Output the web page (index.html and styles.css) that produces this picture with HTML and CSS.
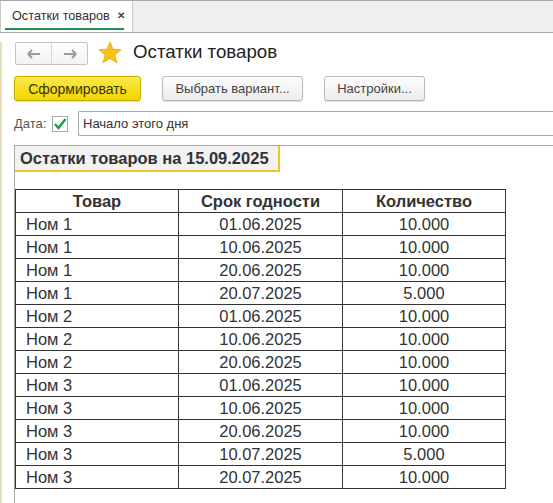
FILE: index.html
```html
<!DOCTYPE html>
<html lang="ru">
<head>
<meta charset="utf-8">
<link rel="stylesheet" href="styles.css">
</head>
<body>
<div class="tabbar">
  <div class="tab"><span class="tab-text">Остатки товаров</span><span class="tab-close">✕</span></div>
</div>
<div class="main">
  <div class="head">
    <div class="nav">
      <div class="nav-btn"><svg width="14" height="10" viewBox="0 0 14 10"><path d="M1 5H13M1 5L5 1M1 5L5 9" stroke="#9a9a9a" stroke-width="2" fill="none"/></svg></div>
      <div class="nav-btn"><svg width="14" height="10" viewBox="0 0 14 10"><path d="M1 5H13M13 5L9 1M13 5L9 9" stroke="#9a9a9a" stroke-width="2" fill="none"/></svg></div>
    </div>
    <svg class="star" width="24" height="23" viewBox="0 0 24 23"><path d="M12 0.8L15 8.3L23.2 8.7L16.8 13.9L19 21.9L12 17.4L5 21.9L7.2 13.9L0.8 8.7L9 8.3Z" fill="#f7c21c" stroke="#e8a800" stroke-width="0.8"/></svg>
    <div class="title">Остатки товаров</div>
  </div>
  <div class="buttons">
    <div class="btn btn-primary">Сформировать</div>
    <div class="btn btn-choose">Выбрать вариант...</div>
    <div class="btn btn-settings">Настройки...</div>
  </div>
  <div class="date-row">
    <span class="date-label">Дата:</span>
    <span class="checkbox"><svg width="14" height="14" viewBox="0 0 14 14"><path d="M2 7L5.5 11L12.5 2" stroke="#1c9a48" stroke-width="2.4" fill="none"/></svg></span>
    <div class="input">Начало этого дня</div>
  </div>
  <div class="report">
    <div class="report-title">Остатки товаров на 15.09.2025</div>
    <table class="grid">
      <thead>
        <tr><th class="c1">Товар</th><th class="c2">Срок годности</th><th class="c3">Количество</th></tr>
      </thead>
      <tbody>
        <tr><td class="name">Ном 1</td><td>01.06.2025</td><td>10.000</td></tr>
        <tr><td class="name">Ном 1</td><td>10.06.2025</td><td>10.000</td></tr>
        <tr><td class="name">Ном 1</td><td>20.06.2025</td><td>10.000</td></tr>
        <tr><td class="name">Ном 1</td><td>20.07.2025</td><td>5.000</td></tr>
        <tr><td class="name">Ном 2</td><td>01.06.2025</td><td>10.000</td></tr>
        <tr><td class="name">Ном 2</td><td>10.06.2025</td><td>10.000</td></tr>
        <tr><td class="name">Ном 2</td><td>20.06.2025</td><td>10.000</td></tr>
        <tr><td class="name">Ном 3</td><td>01.06.2025</td><td>10.000</td></tr>
        <tr><td class="name">Ном 3</td><td>10.06.2025</td><td>10.000</td></tr>
        <tr><td class="name">Ном 3</td><td>20.06.2025</td><td>10.000</td></tr>
        <tr><td class="name">Ном 3</td><td>10.07.2025</td><td>5.000</td></tr>
        <tr><td class="name">Ном 3</td><td>20.07.2025</td><td>10.000</td></tr>
      </tbody>
    </table>
  </div>
</div>
</body>
</html>
```
FILE: styles.css
```css
html, body {
  margin: 0;
  padding: 0;
  background: #fff;
  width: 553px;
  height: 503px;
  overflow: hidden;
  font-family: "Liberation Sans", Arial, sans-serif;
  color: #333;
}
.tabbar {
  height: 31px;
  background: #f0f0f0;
  border-top: 1px solid #a8a8a8;
  border-bottom: 1px solid #a8a8a8;
  display: flex;
}
.tab {
  width: 133px;
  background: #fff;
  border-right: 1px solid #c8c8c8;
  border-left: 1px solid #c8c8c8;
  box-sizing: border-box;
  position: relative;
  display: flex;
  align-items: center;
  padding-left: 11px;
  padding-bottom: 2px;
  font-size: 12.7px;
  color: #333;
}
.tab::after {
  content: "";
  position: absolute;
  left: 4px;
  width: 119px;
  bottom: 2px;
  height: 2px;
  background: #1f9150;
}
.tab-close {
  margin-left: 7px;
  font-size: 10px;
  font-weight: bold;
  color: #444;
}
.main {
  border-left: 2px solid #e6dfb6;
  padding-left: 12px;
  height: 471px;
  box-sizing: border-box;
}
.head {
  display: flex;
  align-items: center;
  height: 23px;
  margin-top: 9px;
}
.nav {
  display: flex;
  margin-left: 1px;
  width: 73px;
  height: 23px;
  box-sizing: border-box;
  border: 1px solid #c4c4c4;
  border-radius: 2px;
  background: linear-gradient(#fff, #f2f2f2);
}
.nav-btn {
  flex: 1;
  display: flex;
  align-items: center;
  justify-content: center;
}
.nav-btn + .nav-btn {
  border-left: 1px solid #d8d8d8;
}
.star {
  margin-left: 10px;
  margin-top: -2px;
}
.title {
  margin-left: 11px;
  font-size: 18.7px;
  color: #222;
  margin-top: -3px;
}
.buttons {
  display: flex;
  margin-top: 11px;
  height: 25px;
}
.btn {
  box-sizing: border-box;
  height: 25px;
  border: 1px solid #b8b8b8;
  border-radius: 3px;
  display: flex;
  align-items: center;
  justify-content: center;
  font-size: 13px;
  color: #444;
  background: linear-gradient(#fdfdfd, #ececec);
  box-shadow: 0 1px 1px rgba(0,0,0,0.15);
}
.btn-primary {
  width: 127px;
  background: linear-gradient(#fbe84a, #f2d600);
  border-color: #c8ac00;
  font-size: 14px;
  color: #3a3300;
}
.btn-choose {
  width: 141px;
  margin-left: 21px;
}
.btn-settings {
  width: 101px;
  margin-left: 21px;
}
.date-row {
  display: flex;
  align-items: center;
  margin-top: 10px;
  height: 25px;
}
.date-label {
  font-size: 13px;
  color: #555;
  width: 38px;
}
.checkbox {
  width: 16px;
  height: 16px;
  box-sizing: border-box;
  border: 1px solid #a8a8a8;
  display: flex;
  align-items: center;
  justify-content: center;
  background: #fff;
}
.input {
  margin-left: 10px;
  flex: 1;
  height: 25px;
  box-sizing: border-box;
  border: 1px solid #a8a8a8;
  border-right: none;
  border-radius: 2px 0 0 2px;
  display: flex;
  align-items: center;
  padding-left: 4px;
  font-size: 13px;
  color: #333;
}
.report {
  margin-top: 9px;
  border-left: 1px solid #a8a8a8;
  border-top: 1px solid #a8a8a8;
  height: 360px;
}
.report-title {
  width: 265px;
  height: 26px;
  box-sizing: border-box;
  background: #f2f2f2;
  border-bottom: 2px solid #f2c526;
  border-right: 2px solid #f2c526;
  font-weight: bold;
  font-size: 16.5px;
  color: #333;
  padding-left: 5px;
  display: flex;
  align-items: center;
}
.grid {
  margin-top: 17px;
  border-collapse: collapse;
  font-size: 16.5px;
  color: #333;
}
.grid th, .grid td {
  border: 1px solid #333;
  height: 22px;
  padding: 0;
  text-align: center;
  line-height: 22px;
}
.grid th {
  font-weight: bold;
}
.grid td.name {
  text-align: left;
  padding-left: 10px;
}
.c1 { width: 162px; }
.c2 { width: 163px; }
.c3 { width: 162px; }
```
